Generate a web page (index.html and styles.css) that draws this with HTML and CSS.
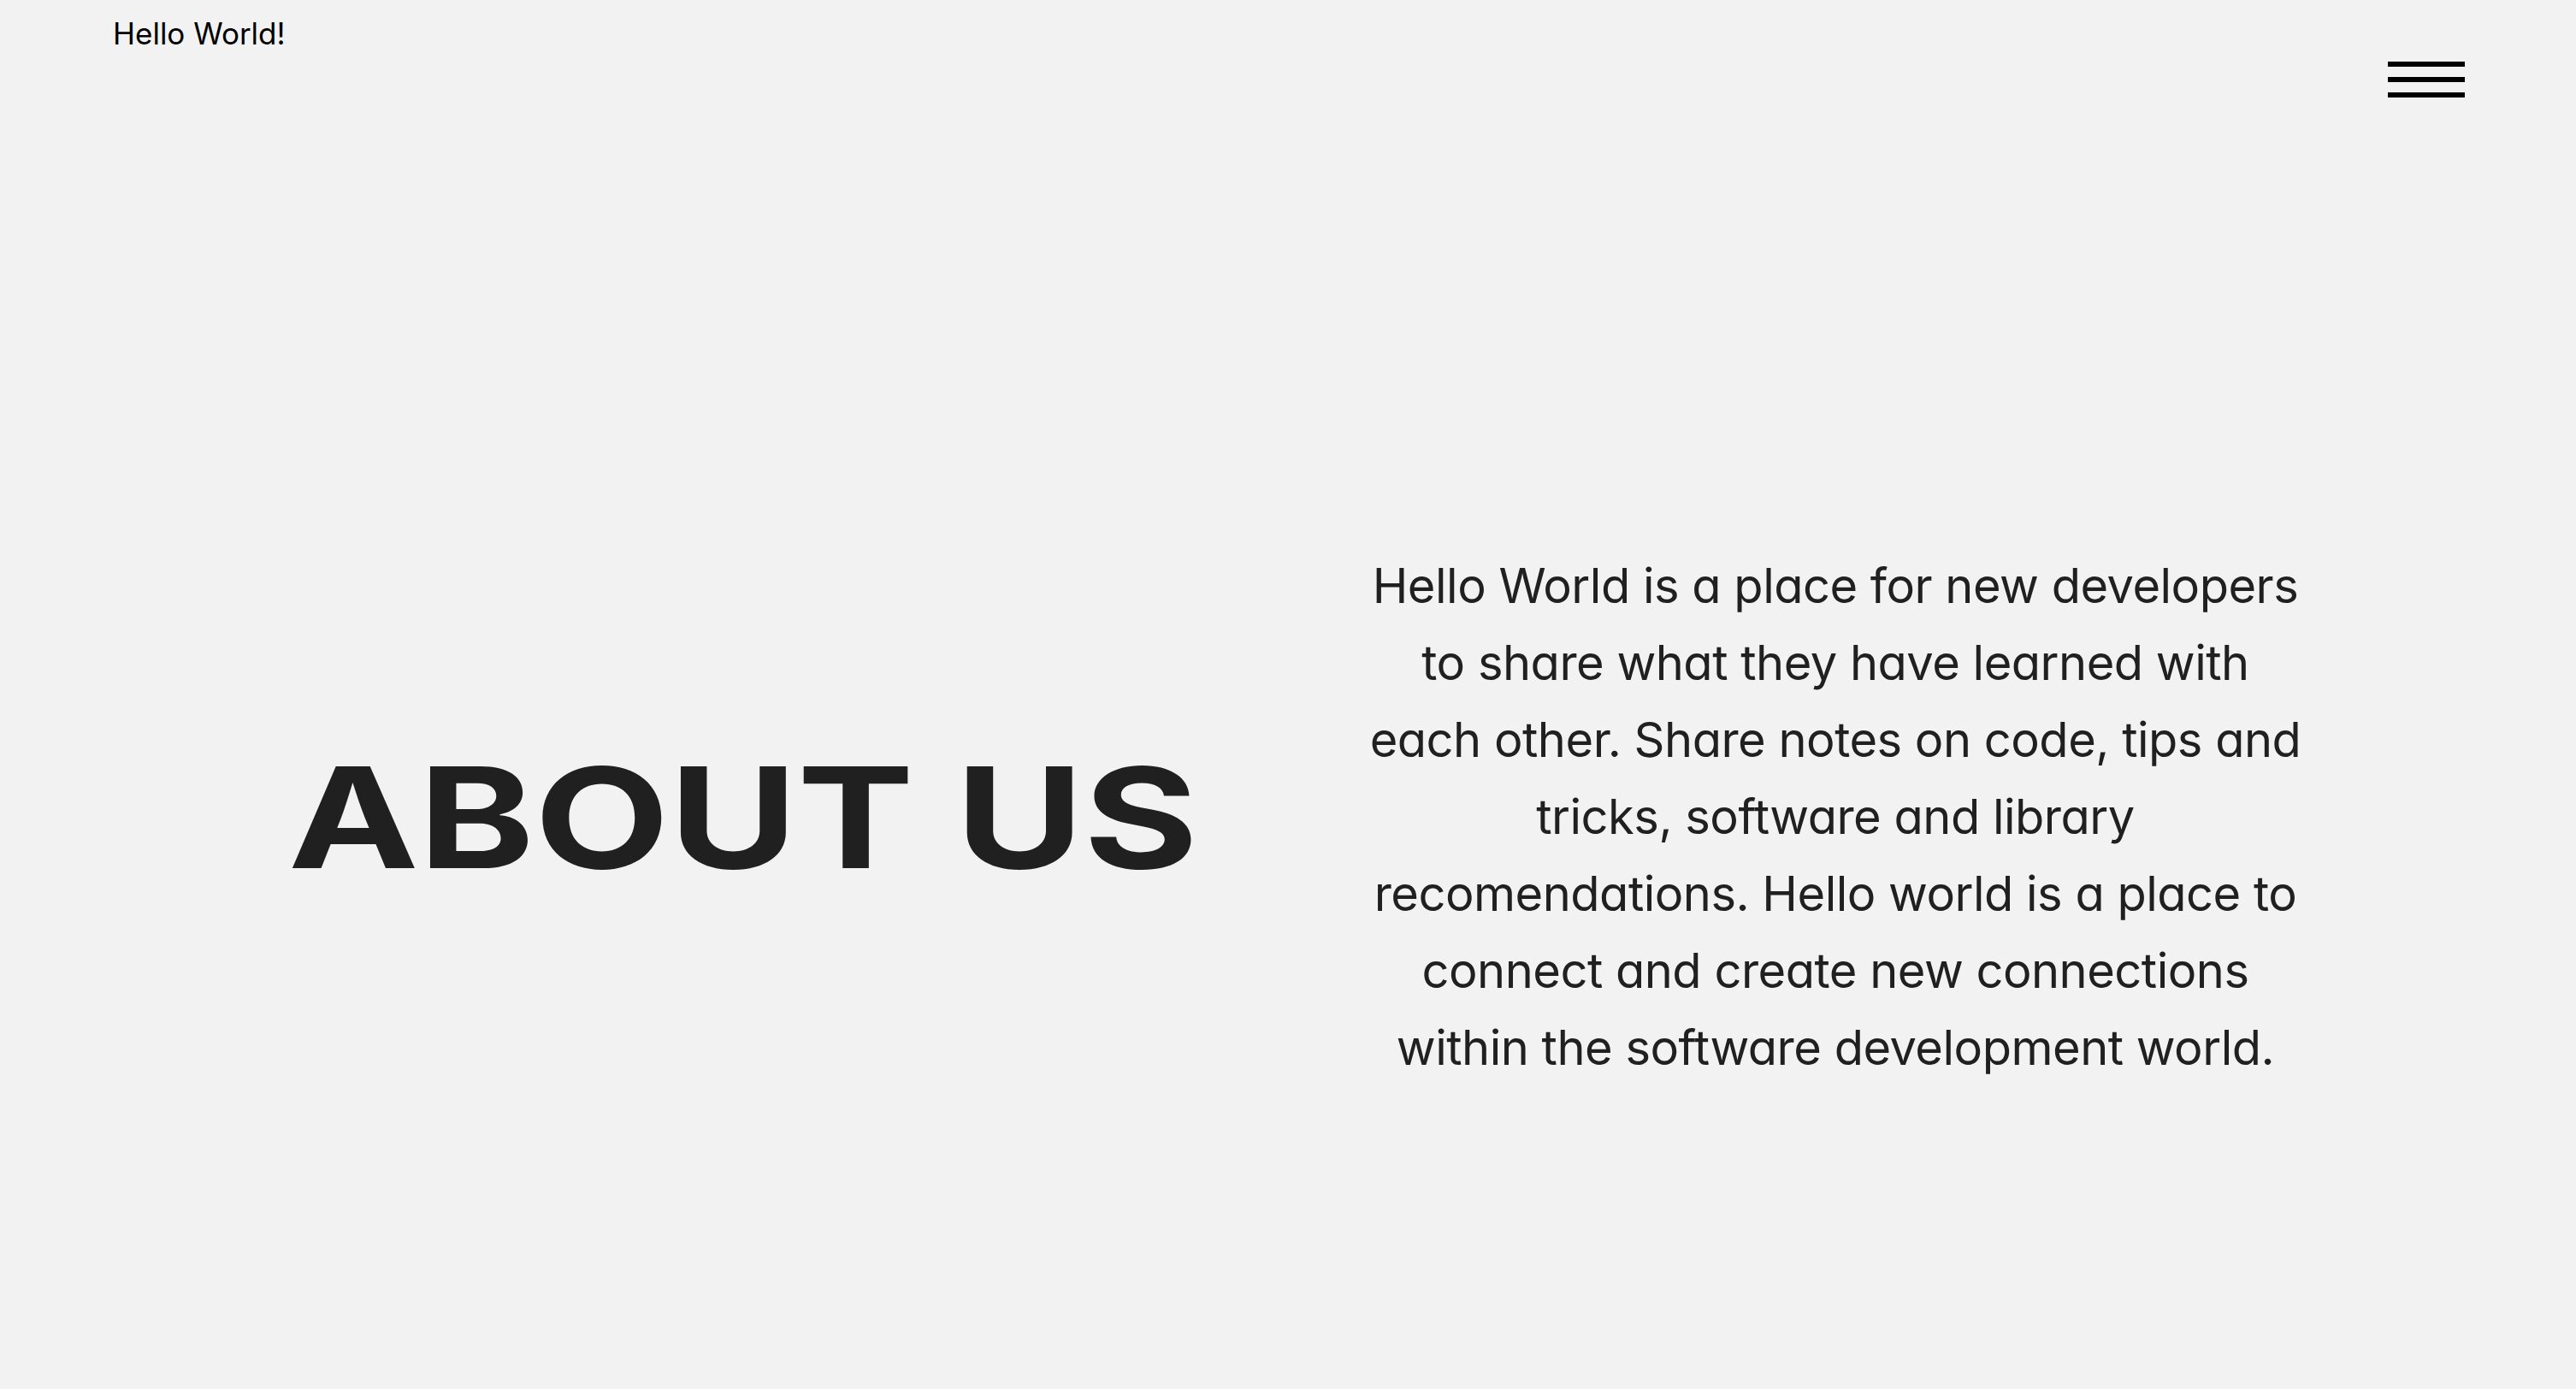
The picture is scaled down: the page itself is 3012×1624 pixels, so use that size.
FILE: index.html
```html
<!DOCTYPE html>
<html lang="en">
<head>
<meta charset="utf-8">
<title>Hello World! - About Us</title>
<link rel="stylesheet" href="styles.css">
</head>
<body>
<div class="page">
  <header class="site-header">
    <a class="logo" href="#">Hello World!</a>
    <button class="menu-btn" aria-label="Menu">
      <span class="bar"></span>
      <span class="bar"></span>
      <span class="bar"></span>
    </button>
  </header>
  <main class="about">
    <div class="about-title-col">
      <h1 class="about-title">ABOUT US</h1>
    </div>
    <div class="about-text-col">
      <p class="about-text">Hello World is a place for new developers to share what they have learned with each other. Share notes on code, tips and tricks, software and library recomendations. Hello world is a place to connect and create new connections within the software development world.</p>
    </div>
  </main>
</div>
</body>
</html>
```
FILE: styles.css
```css
* {
  box-sizing: border-box;
}

html, body {
  margin: 0;
  padding: 0;
  background: #f2f2f2;
}

body {
  font-family: Inter, "Liberation Sans", sans-serif;
  font-feature-settings: "cv11" 1;
  color: #202020;
}

.page {
  min-height: 100vh;
  display: flex;
  flex-direction: column;
}

.site-header {
  display: flex;
  justify-content: space-between;
  align-items: flex-start;
  padding: 18px 130px 172px 132px;
}

.logo {
  font-size: 35px;
  line-height: 42px;
  color: #000;
  text-decoration: none;
  letter-spacing: 0;
}

.menu-btn {
  margin-top: 54px;
  width: 90px;
  padding: 0;
  border: 0;
  background: none;
  display: flex;
  flex-direction: column;
  gap: 12px;
  cursor: pointer;
}

.bar {
  display: block;
  width: 90px;
  height: 6px;
  background: #000;
}

.about {
  flex: 1;
  display: grid;
  grid-template-columns: 1100px 1100px;
  column-gap: 180px;
  justify-content: center;
  align-items: center;
}

.about-title-col {
  display: flex;
  justify-content: center;
  padding-left: 6px;
}

.about-title {
  display: inline-block;
  margin: 0;
  font-size: 163px;
  line-height: 1;
  font-weight: 700;
  letter-spacing: 0;
  transform: scaleX(1.255);
}

.about-text-col {
  display: flex;
  justify-content: center;
}

.about-text {
  margin: 0;
  max-width: 1095px;
  text-align: center;
  font-size: 56px;
  line-height: 90px;
  letter-spacing: -0.5px;
}
```
